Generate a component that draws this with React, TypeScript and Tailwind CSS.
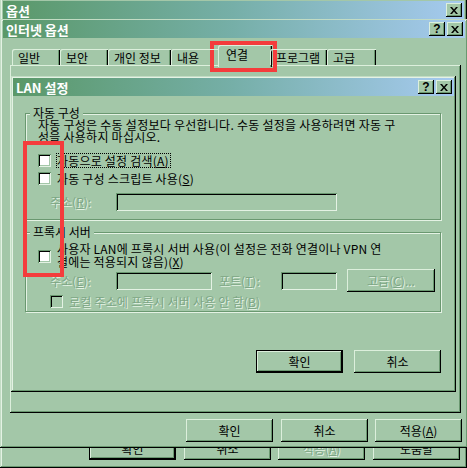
import React from 'react';

// classic 3d frames, green scheme
const raised =
  'bg-[#a3c7a8] shadow-[inset_-1px_-1px_0_#000,inset_1px_1px_0_#dcefdc,inset_-2px_-2px_0_#6a9870]';
const windowFrame =
  'bg-[#a3c7a8] shadow-[inset_-1px_-1px_0_#000,inset_1px_1px_0_#c2dcc4,inset_-2px_-2px_0_#6a9870,inset_2px_2px_0_#e4f2e4]';
const sunken =
  'shadow-[inset_1px_1px_0_#6a9870,inset_-1px_-1px_0_#e4f2e4,inset_2px_2px_0_#000,inset_-2px_-2px_0_#a3c7a8]';
const disabledText = 'text-[#7da685] [text-shadow:1px_1px_0_#e4f2e4]';

function XGlyph() {
  return (
    <svg width="8" height="7" viewBox="0 0 8 7">
      <path d="M0 0h2l2 2.4L6 0h2L5 3.5 8 7H6L4 4.6 2 7H0l3-3.5z" fill="#000" />
    </svg>
  );
}

function TitleBtn({ kind }: { kind: 'x' | '?' }) {
  return (
    <div className={`w-[16px] h-[14px] flex items-center justify-center ${raised}`}>
      {kind === 'x' ? (
        <XGlyph />
      ) : (
        <span className="font-['Liberation_Sans',sans-serif] font-bold text-[12px] leading-none text-black -mt-[1px]">?</span>
      )}
    </div>
  );
}

function TitleBar({ title, help }: { title: string; help?: boolean }) {
  return (
    <div className="h-[18px] shrink-0 flex items-center gap-[2px] bg-linear-to-r from-[#5a9868] via-[#76afa8] to-[#a6caf0] pl-[3px] pr-[2px]">
      <span className="flex-1 text-white font-bold leading-none text-[13px]">{title}</span>
      {help && <TitleBtn kind="?" />}
      <TitleBtn kind="x" />
    </div>
  );
}

function Button({ children, def, disabled, className = '' }: { children: React.ReactNode; def?: boolean; disabled?: boolean; className?: string }) {
  return (
    <div
      className={`w-[87px] h-[23px] flex items-center justify-center text-[12px] leading-none ${raised} ${
        def ? 'border border-black' : ''
      } ${disabled ? disabledText : 'text-black'} ${className}`}
    >
      {children}
    </div>
  );
}

function Check({ disabled }: { disabled?: boolean }) {
  return <div className={`w-[13px] h-[13px] shrink-0 ${disabled ? 'bg-[#a3c7a8]' : 'bg-white'} ${sunken}`} />;
}

function Input({ w }: { w: string }) {
  return <div className={`h-[18px] ${w} ${sunken}`} />;
}

const tabs = [
  { label: '일반', w: 'w-[48px]' },
  { label: '보안', w: 'w-[48px]' },
  { label: '개인 정보', w: 'w-[63px]' },
  { label: '내용', w: 'w-[49px]' },
  { label: '연결', w: 'w-[54px]', active: true },
  { label: '프로그램', w: 'w-[57px]' },
  { label: '고급', w: 'w-[49px]' },
];

export default function App() {
  return (
    <div className="relative w-[467px] h-[468px] overflow-hidden bg-[#a3c7a8] font-['Noto_Sans_CJK_KR','Noto_Sans',sans-serif] text-[12px] leading-[12px] text-black">
      {/* 옵션 (back window) */}
      <div className={`absolute left-0 top-[-2px] w-[467px] h-[470px] p-[3px] flex flex-col ${windowFrame}`}>
        <TitleBar title="옵션" />
        <div className="flex-1" />
        <div className="flex justify-end pr-[4px] pb-[5px]">
          <Button def>확인</Button>
          <Button className="ml-[8px]">취소</Button>
          <Button disabled className="ml-[7px]">
            적용(<u>A</u>)
          </Button>
          <Button className="ml-[8px]">도움말</Button>
        </div>
      </div>

      {/* 인터넷 옵션 */}
      <div className={`absolute left-0 top-[19px] w-[468px] h-[429px] pt-[1px] px-[3px] flex flex-col ${windowFrame}`}>
        <TitleBar title="인터넷 옵션" help />
        <div className="relative z-10 mt-[7px] ml-[9px] h-[20px] flex items-end">
          {tabs.map((t) =>
            t.active ? (
              <div
                key={t.label}
                className={`${t.w} -mx-[2px] -mb-[2px] h-[22px] pl-[8px] pt-[4px] bg-[#a3c7a8] rounded-tl-[2px] shadow-[inset_1px_1px_0_#dcefdc,inset_-1px_0_0_#000,inset_-2px_0_0_#6a9870]`}
              >
                {t.label}
              </div>
            ) : (
              <div
                key={t.label}
                className={`${t.w} h-[16px] pl-[6px] pt-[3px] whitespace-nowrap rounded-tl-[2px] shadow-[inset_1px_1px_0_#dcefdc,inset_-1px_0_0_#000,inset_-2px_0_0_#6a9870]`}
              >
                {t.label}
              </div>
            )
          )}
        </div>
        <div className={`ml-[7px] w-[451px] h-[348px] ${raised}`} />
        <div className="mt-[6px] flex justify-end mr-[3px]">
          <Button>확인</Button>
          <Button className="ml-[8px]">취소</Button>
          <Button className="ml-[7px]">
            적용(<u>A</u>)
          </Button>
        </div>
      </div>

      {/* LAN 설정 */}
      <div className={`absolute left-[11px] top-[76px] w-[445px] h-[316px] p-[2px] flex flex-col ${windowFrame}`}>
        <TitleBar title="LAN 설정" help />
        <div className="pl-[12px] pr-[13px] flex flex-col">
          <fieldset className="mt-[11px] border border-[#6a9870] shadow-[1px_1px_0_#e4f2e4,inset_1px_1px_0_#e4f2e4] pb-[8px]">
            <legend className="ml-[4px] px-[3px] bg-[#a3c7a8] leading-[12px]">자동 구성</legend>
            <div className="ml-[12px] tracking-[0.25px]">
              자동 구성은 수동 설정보다 우선합니다. 수동 설정을 사용하려면 자동 구
              <br />
              성을 사용하지 마십시오.
            </div>
            <div className="mt-[10px] ml-[12px] h-[15px] flex items-center">
              <Check />
              <span className="ml-[5px] h-[15px] flex items-center border border-dotted border-black pr-[1px] tracking-[0.2px]">
                자동으로 설정 검색(<u>A</u>)
              </span>
            </div>
            <div className="mt-[3px] ml-[12px] h-[15px] flex items-center">
              <Check />
              <span className="ml-[6px] tracking-[0.2px]">
                자동 구성 스크립트 사용(<u>S</u>)
              </span>
            </div>
            <div className="mt-[7px] ml-[24px] flex items-center">
              <span className={`w-[66px] ${disabledText}`}>
                주소(<u>R</u>):
              </span>
              <Input w="w-[221px]" />
            </div>
          </fieldset>

          <fieldset className="mt-[6px] border border-[#6a9870] shadow-[1px_1px_0_#e4f2e4,inset_1px_1px_0_#e4f2e4] pb-[2px]">
            <legend className="ml-[4px] px-[3px] bg-[#a3c7a8] leading-[12px]">프록시 서버</legend>
            <div className="mt-[5px] ml-[12px] flex items-start">
              <div className="mt-[7px]">
                <Check />
              </div>
              <span className="ml-[6px] tracking-[0.2px] leading-[12.5px]">
                사용자 LAN에 프록시 서버 사용(이 설정은 전화 연결이나 VPN 연
                <br />
                결에는 적용되지 않음)(<u>X</u>)
              </span>
            </div>
            <div className="mt-[1px] ml-[24px] h-[23px] flex items-center">
              <span className={`w-[66px] ${disabledText}`}>
                주소(<u>E</u>):
              </span>
              <Input w="w-[96px]" />
              <span className={`ml-[7px] w-[62px] ${disabledText}`}>
                포트(<u>T</u>):
              </span>
              <Input w="w-[56px]" />
              <Button disabled className="ml-[10px] w-[88px]">
                고급(<u>C</u>)...
              </Button>
            </div>
            <div className="mt-[2px] ml-[24px] h-[15px] flex items-center">
              <Check disabled />
              <span className={`ml-[6px] tracking-[0.2px] ${disabledText}`}>
                로컬 주소에 프록시 서버 사용 안 함(<u>B</u>)
              </span>
            </div>
          </fieldset>

          <div className="mt-[38px] flex justify-end">
            <Button def>확인</Button>
            <Button className="ml-[11px]">취소</Button>
          </div>
        </div>
      </div>

      {/* red annotation boxes */}
      <div className="absolute left-[210px] top-[41px] w-[67px] h-[31px] border-[4px] border-[#f43c3c]" />
      <div className="absolute left-[23px] top-[141px] w-[41px] h-[136px] border-[4px] border-[#f43c3c]" />
    </div>
  );
}
